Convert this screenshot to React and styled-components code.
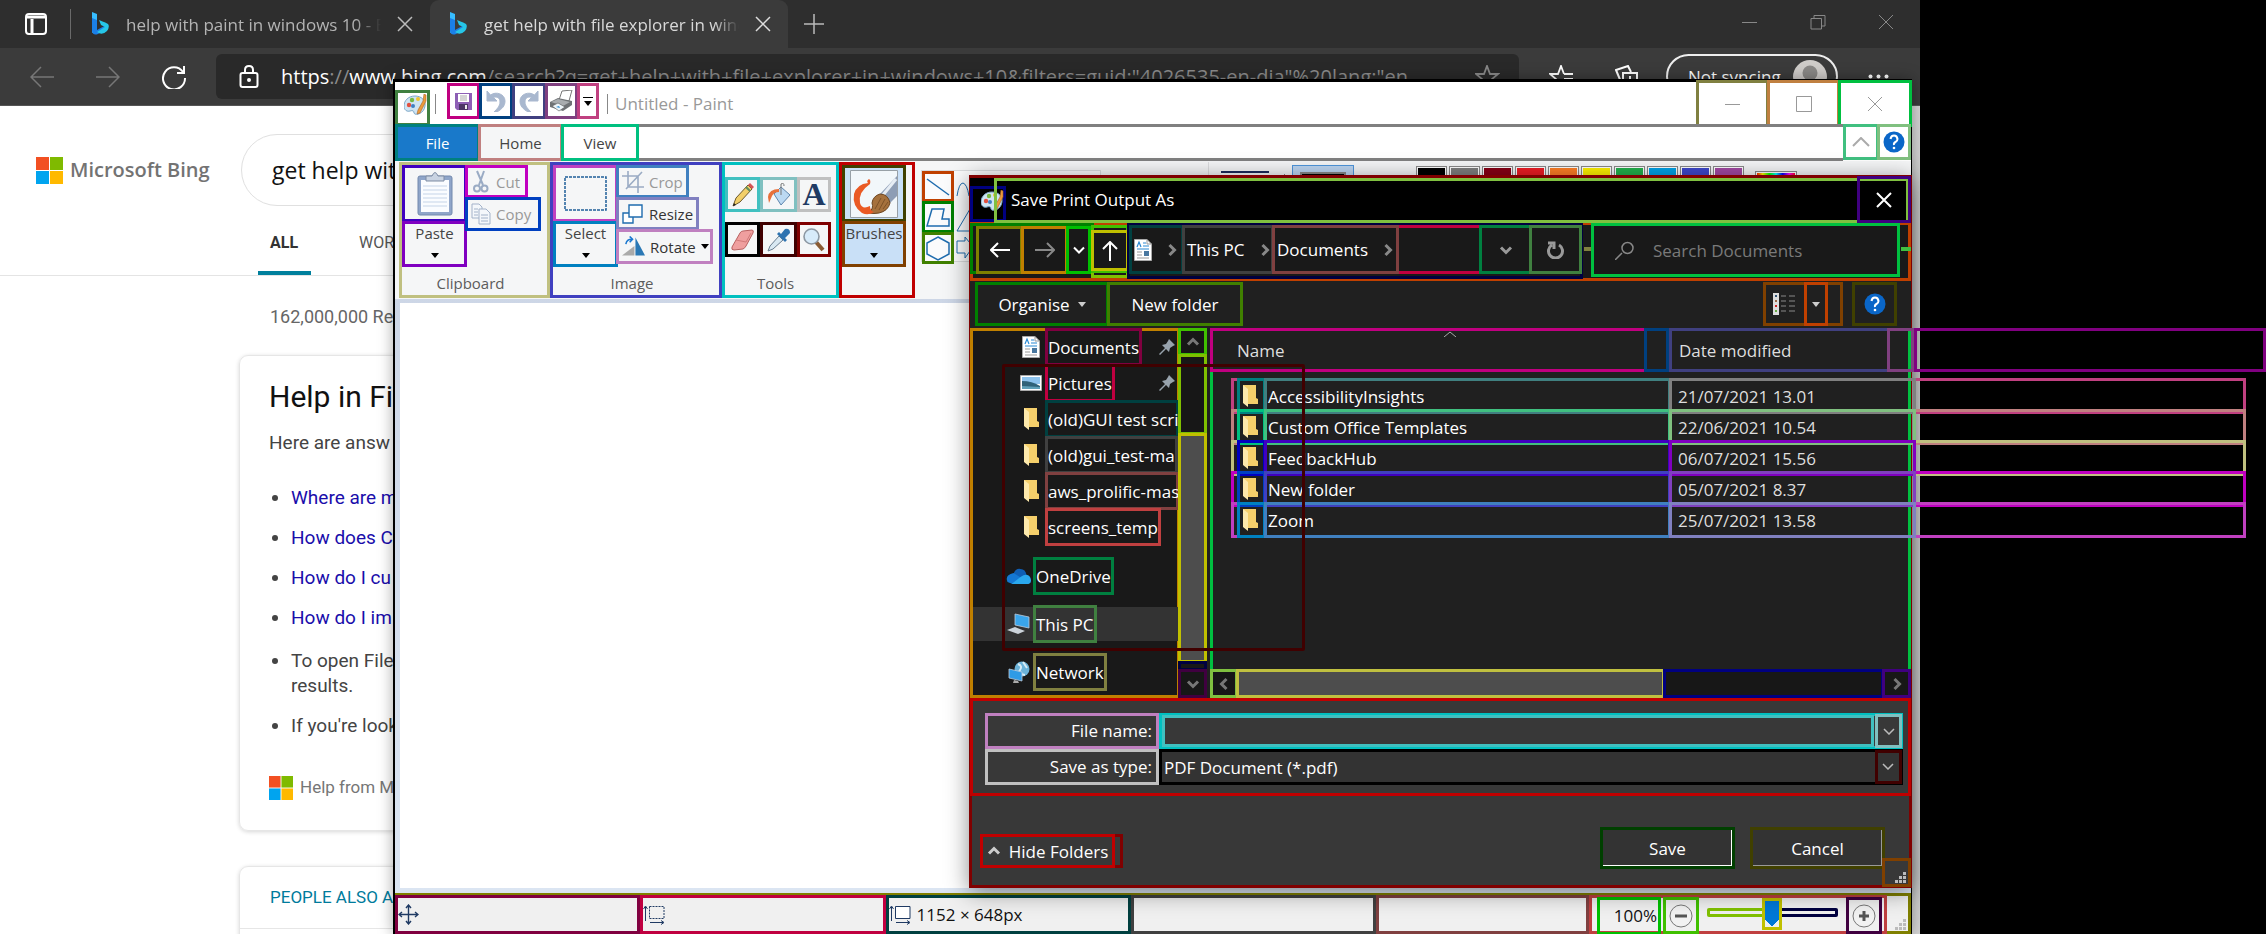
import React from "react";
import styled, { createGlobalStyle, css } from "styled-components";

const ui = '"Open Sans", "Noto Sans", sans-serif';
const web = 'Roboto, "Liberation Sans", sans-serif';

const Global = createGlobalStyle`
  *, *::before, *::after { box-sizing: border-box; }
  body { margin: 0; background: #000; font-family: ${ui}; }
  button, input, select { font: inherit; color: inherit; margin: 0; padding: 0; border: 0; background: none; border-radius: 0; outline: 0; }
  svg { display: block; flex: none; }
`;

const frame = css`
  box-shadow: inset 0 0 0 3px ${(p) => p.$c};
`;

const Desktop = styled.div`
  position: relative;
  height: 100vh;
  min-height: 900px;
  overflow: hidden;
  background: #000;
`;

/* ---------- browser ---------- */
const Browser = styled.div`
  position: relative;
  height: 100%;
  margin-right: 346px;
  background: #fff;
  overflow: hidden;
  display: flex;
  flex-direction: column;
`;
const TabStrip = styled.div`
  display: flex;
  align-items: center;
  height: 48px;
  flex: none;
  background: #2e2e2e;
  color: #b8b8b8;
  padding-left: 25px;
`;
const StripDivider = styled.span`
  width: 1px;
  height: 30px;
  margin: 0 1px 0 23px;
  background: #6a6a6a;
`;
const Tab = styled.div`
  display: flex;
  align-items: center;
  height: 48px;
  width: 358px;
  padding: 0 18px 0 20px;
  gap: 17px;
  font-size: 17px;
  border-radius: 9px 9px 0 0;
  background: ${(p) => (p.$active ? "#3b3b3b" : "transparent")};
  color: ${(p) => (p.$active ? "#d8d8d8" : "#b4b4b4")};
`;
const TabTitle = styled.span`
  flex: 1;
  min-width: 0;
  overflow: hidden;
  white-space: nowrap;
  mask-image: linear-gradient(90deg, #000 90%, transparent);
`;
const Plain = styled.button`
  display: flex;
  align-items: center;
  justify-content: center;
  width: ${(p) => p.$w || 14}px;
  flex: none;
`;
const WinControls = styled.div`
  display: flex;
  margin-left: auto;
  gap: 54px;
  padding-right: 27px;
  margin-top: -5px;
`;
const ToolBar = styled.div`
  display: flex;
  align-items: center;
  flex: none;
  height: 58px;
  padding: 0 31px 0 30px;
  background: #3b3b3b;
  border-bottom: 1px solid #555;
`;
const NavButtons = styled.div`
  display: flex;
  gap: 42px;
  margin-right: 30px;
`;
const Address = styled.div`
  flex: 1;
  display: flex;
  align-items: center;
  height: 45px;
  padding: 0 19px 0 23px;
  gap: 22px;
  border-radius: 6px;
  background: #292929;
  color: #8c8c8c;
  font-size: 20px;
  white-space: nowrap;
  b { font-weight: 400; color: #fff; }
  span { flex: 1; min-width: 0; overflow: hidden; }
`;
const Profile = styled.button`
  display: flex;
  align-items: center;
  gap: 12px;
  height: 45px;
  width: 172px;
  && { margin-left: 27px; padding: 0 7px 0 20px; border: 2px solid #eee; border-radius: 23px; color: #fff; font-size: 17px; }
  white-space: nowrap;
`;
const Extras = styled.div`
  display: flex;
  align-items: center;
  margin-left: 30px;
  gap: 41px;
`;
const Page = styled.div`
  flex: 1;
  min-height: 0;
  overflow: hidden;
  font-family: ${web};
  border-right: 8px solid #d4d4d4;
`;
const PageTop = styled.header`
  display: flex;
  align-items: center;
  padding: 28px 0 0 36px;
`;
const Brand = styled.a`
  display: flex;
  align-items: center;
  gap: 7px;
  width: 205px;
  color: #737373;
  font: 600 20px/28px ${ui};
  text-decoration: none;
  white-space: nowrap;
`;
const SearchBox = styled.input`
  width: 900px;
  height: 72px;
  && { padding-left: 30px; border: 1px solid #e0e0e0; border-radius: 36px; font-size: 23px; font-family: ${ui}; color: #111; }
`;
const Scopes = styled.nav`
  display: flex;
  gap: 48px;
  height: 70px;
  padding-left: 258px;
  border-bottom: 1px solid #e4e4e4;
  font-size: 16px;
  a { display: flex; align-items: center; padding: 8px 12px 0; color: #555; text-decoration: none; border-bottom: 4px solid transparent; margin-right: -12px; }
  a:first-child { color: #333; font-weight: 700; border-color: #00809d; margin-right: 0; width: 53px; }
  a + a { padding-left: 0; }
`;
const Count = styled.p`
  margin: 30px 0 27px 270px;
  font-size: 18px;
  line-height: 22px;
  color: #666;
`;
const Card = styled.section`
  width: 900px;
  margin: 0 0 35px 239px;
  padding: 23px 29px 30px;
  border: 1px solid #e6e6e6;
  border-radius: 9px;
  box-shadow: 0 1px 4px rgba(0, 0, 0, 0.16);
  color: #444;
  font-size: 19px;
  line-height: 25px;
  h2 { margin: 0; font-weight: 400; font-size: 30px; line-height: 36px; color: #111; }
  p { margin: 15px 0 0; }
  ul { margin: 30px 0 0; padding: 0 0 0 22px; }
  li { margin-bottom: 15px; }
  li:nth-child(4) { margin-bottom: 18px; }
  li a { color: #1a0dab; text-decoration: none; }
`;
const Source = styled.div`
  display: flex;
  align-items: center;
  gap: 7px;
  margin-top: 37px;
  color: #767676;
  font-size: 17px;
`;
const AlsoAsk = styled(Card)`
  padding: 0;
  h3 { margin: 0; padding: 18px 30px 18px; font-weight: 400; font-size: 17px; color: #007b9c; border-bottom: 1px solid #e6e6e6; }
  div { height: 60px; }
`;

/* ---------- paint window ---------- */
const Paint = styled.div`
  position: absolute;
  inset: 79px 354px 0 393px;
  display: flex;
  flex-direction: column;
  background: linear-gradient(#c8d1e2, #dce6f3);
  border: 3px solid #000;
  border-width: 3px 1px 0 2px;
  box-shadow: 0 0 14px rgba(0, 0, 0, 0.35);
`;
const PaintTitle = styled.div`
  display: flex;
  align-items: flex-start;
  height: 44px;
  flex: none;
  background: #fff;
  color: #999;
  font-size: 17px;
`;
const Sep = styled.i`
  width: 1px;
  height: 20px;
  margin: 12px ${(p) => p.$r || 8}px 0 ${(p) => p.$l || 5}px;
  background: #888;
`;
const Framed = styled.button`
  ${frame}
  display: flex;
  align-items: center;
  justify-content: center;
  flex: none;
  width: ${(p) => p.$w}px;
  height: ${(p) => p.$h}px;
  white-space: nowrap;
`;
const AppIcon = styled(Framed)`
  && { margin-top: 8px; padding: 0 0 6px 5px; }
`;
const QuickTools = styled.div`
  display: flex;
  padding: 1px 0 0 3px;
  ${Framed} + ${Framed} { margin-left: -1px; }
`;
const PaintCaption = styled.span`
  line-height: 44px;
`;
const CaptionButtons = styled.div`
  display: flex;
  margin: -2px -1px 0 auto;
  ${Framed} + ${Framed} { margin-left: -2px; }
`;
const RibbonTabs = styled.div`
  box-shadow: inset 0 3px #808080, inset 0 -3px #808080;
  display: flex;
  height: 37px;
  margin-top: -2px;
  flex: none;
  background: #fff;
  color: #444;
  font-size: 15px;
  ${Framed} + ${Framed} { margin-left: -2px; }
`;
const RibbonTab = styled(Framed)`
  background: ${(p) => p.$bg || "#fff"};
  color: ${(p) => (p.$bg === "#1979ca" ? "#fff" : "#444")};
`;
const RibbonEnd = styled.div`
  display: flex;
  margin-left: auto;
  background: #fff;
`;
const Ribbon = styled.div`
  display: flex;
  align-items: flex-start;
  height: 138px;
  flex: none;
  padding: 1px 0 0 4px;
  background: #f5f6f7;
  color: #444;
  font-size: 15px;
`;
const Group = styled.section`
  ${frame}
  position: relative;
  display: flex;
  align-items: flex-start;
  flex: none;
  width: ${(p) => p.$w}px;
  height: 136px;
  padding: 3px;
`;
const GroupName = styled.span`
  position: absolute;
  inset: auto 0 3px;
  text-align: center;
  line-height: 24px;
  color: #5c5c5c;
  padding-right: ${(p) => p.$r || 0}px;
`;
const Stack = styled.div`
  display: flex;
  flex-direction: column;
  margin-left: ${(p) => p.$l || 0}px;
  > * + * { margin-top: -1px; }
`;
const Tool = styled(Framed)`
  && { justify-content: flex-start; gap: 5px; padding-left: 6px; color: ${(p) => (p.$off ? "#999" : "#333")}; }
`;
const LetterTool = styled(Framed)`
  && { font: 700 32px "Liberation Serif", serif; color: #1f3a63; }
`;
const Big = styled(Framed)`
  && { background: ${(p) => p.$bg || "none"}; }
`;
const BigLabel = styled(Big)`
  && { flex-direction: column; justify-content: flex-start; gap: 7px; line-height: 25px; }
`;
const ToolGrid = styled.div`
  display: grid;
  grid-template-columns: 35px 37px 34px;
  row-gap: 10px;
  padding-top: 12px;
  ${Framed} { width: 100%; }
`;
const Shapes = styled.div`
  display: flex;
  flex: none;
  width: 180px;
  height: 92px;
  margin: 8px 0 0 6px;
  border: 1px solid #d9dbdd;
  background: #fbfbfc;
`;
const SizeArea = styled.div`
  display: flex;
  flex: 1;
  height: 40px;
  margin-left: 107px;
  border-left: 1px solid #dcdddf;
`;
const SizeLine = styled.i`
  width: 48px;
  height: 2px;
  margin: 9px 14px 0 12px;
  background: #1c2a5c;
`;
const SizeButton = styled.button`
  width: 62px;
  height: 40px;
  && { margin: 3px 62px 0 6px; padding: 6px 7px; border: 1px solid #4f96dc; background: #bcd6f2; }
  i { display: block; height: 30px; border: 2px solid #888; background: #000; }
`;
const Swatch = styled.button`
  width: 31px;
  height: 30px;
  && { margin: 4px 2px 0 0; border: 1px solid #8a8a8a; background: ${(p) => p.$bg}; box-shadow: inset 0 0 0 1px #fff; }
`;
const Rainbow = styled(Swatch)`
  width: 42px;
  && { margin: 9px 0 0 9px; background: linear-gradient(90deg, red, yellow, lime, cyan, blue, magenta, red); }
`;
const Canvas = styled.div`
  flex: 1;
  margin: 4px 28px 5px 5px;
  background: #fff;
`;
const Status = styled.div`
  display: flex;
  flex: none;
  height: 41px;
  padding-top: 2px;
  background: #f0f0f0;
  box-shadow: inset 0 0 0 3px #808000;
  font-size: 17px;
  color: #111;
`;
const Cell = styled.div`
  ${frame}
  display: flex;
  align-items: center;
  gap: 6px;
  flex: ${(p) => p.$grow || 246} 1 0;
  padding-left: 3px;
  white-space: nowrap;
`;
const ZoomGroup = styled.div`
  ${frame}
  display: flex;
  align-items: center;
  flex: none;
  width: 298px;
  padding: 2px 4px 0 8px;
`;
const ZoomValue = styled.output`
  ${frame}
  width: 64px;
  height: 38px;
  line-height: 38px;
  text-align: right;
  padding-right: 4px;
  margin-right: 2px;
`;
const Slider = styled.div`
  position: relative;
  display: flex;
  align-self: flex-start;
  width: 131px;
  height: 9px;
  margin: 11px 8px 0;
`;
const TrackPart = styled.i`
  ${frame}
  flex: 1;
  border-radius: 2px;
`;
const Range = styled.input`
  position: absolute;
  inset: -10px 0;
  width: 100%;
  height: 32px;
  appearance: none;
  &::-webkit-slider-thumb {
    appearance: none;
    width: 20px;
    height: 32px;
    border: 3px solid #c0c000;
    background:
      linear-gradient(#0078d7, #0078d7) 0 0 / 14px 18px no-repeat,
      linear-gradient(to bottom left, #0078d7 50%, transparent 50%) 0 18px / 7px 8px no-repeat,
      linear-gradient(to bottom right, #0078d7 50%, transparent 50%) 7px 18px / 7px 8px no-repeat,
      #f0f0f0;
    background-origin: padding-box;
  }
`;
const GripSlot = styled.div`
  display: flex;
  align-items: flex-end;
  width: 24px;
  padding: 0 4px 3px 8px;
`;

/* ---------- save dialog ---------- */
const Dialog = styled.div`
  position: absolute;
  top: 175px;
  left: 969px;
  right: 354px;
  padding: 3px 1px 1px;
  background: #383838;
  box-shadow: inset 0 0 0 3px #800000, 0 4px 22px rgba(0, 0, 0, 0.45);
  color: #fff;
  font-size: 17px;
`;
const DialogTitle = styled.div`
  display: flex;
  align-items: flex-start;
  height: 45px;
  background: #000;
`;
const TitleIcon = styled.span`
  ${frame}
  width: 36px;
  height: 36px;
  margin: 8px -12px 0 0;
  padding: 4px 0 0 11px;
`;
const TitleText = styled.h1`
  ${frame}
  flex: 1;
  margin: 0 2px 0 0;
  padding-left: 17px;
  font-size: 17px;
  font-weight: 400;
  line-height: 44px;
  height: 45px;
`;
const TitleClose = styled(Framed)`
  && { margin: -2px 0 0 -54px; }
`;
const NavBar = styled.div`
  ${frame}
  display: flex;
  align-items: flex-start;
  height: 59px;
  margin-top: -1px;
  padding-top: 1px;
  background: #191919;
`;
const History = styled.div`
  ${frame}
  display: flex;
  width: 124px;
  height: 51px;
  margin: 0 -3px 0 0;
  padding: 3px 0 0 6px;
  ${Framed} + ${Framed} { margin-left: -2px; }
`;
const UpOuter = styled.div`
  ${frame}
  width: 38px;
  height: 53px;
  margin: 2px -2px 0 0;
`;
const UpInner = styled.div`
  ${frame}
  height: 48px;
  padding-top: 5px;
`;
const PathBar = styled.div`
  ${frame}
  display: flex;
  flex: 1;
  height: 56px;
  padding: 2px 1px 0 2px;
  background: #191919;
`;
const Path = styled.nav`
  ${frame}
  display: flex;
  flex: 1;
  height: 49px;
`;
const Crumb = styled(Framed)`
  && { justify-content: flex-start; gap: 13px; padding-left: 5px; }
  && + & { margin-left: -2px; }
`;
const PathButton = styled(Framed)`
  && { margin-left: -3px; }
`;
const Tick = styled.i`
  flex: none;
  width: ${(p) => p.$w}px;
  height: 4px;
  margin: 24px 0 0 1px;
  background: ${(p) => p.$c};
`;
const SearchField = styled.label`
  ${frame}
  display: flex;
  align-items: center;
  gap: 19px;
  width: 309px;
  height: 54px;
  padding-left: 24px;
  flex: none;
  input { width: 220px; }
  input::placeholder { color: #7a7a7a; opacity: 1; }
`;
const Commands = styled.div`
  display: flex;
  height: 48px;
  padding: 1px 14px 3px 5px;
  background: #202020;
  ${Framed} + ${Framed} { margin-left: -2px; }
`;
const Command = styled(Framed)`
  && { gap: 8px; }
`;
const ViewGroup = styled.div`
  ${frame}
  display: flex;
  align-items: center;
  gap: 9px;
  width: 80px;
  height: 44px;
  margin: 0 9px 0 auto;
  padding-left: 10px;
`;
const Body = styled.div`
  display: flex;
  height: 370px;
  margin-top: -1px;
  background: #202020;
`;
const Tree = styled.ul`
  ${frame}
  width: 210px;
  margin: 0 -2px 0 0;
  padding: 1px 1px 0 3px;
  background-color: #191919;
  list-style: none;
  overflow: hidden;
`;
const Node = styled.li`
  display: flex;
  align-items: center;
  height: ${(p) => (p.$root ? 34 : 36)}px;
  margin: ${(p) => (p.$root ? "14px" : 0)} 0 0;
  padding-left: ${(p) => (p.$root ? 33 : 45)}px;
  background: ${(p) => (p.$on ? "#333" : "none")};
  > svg:first-child { width: 26px; margin-right: 1px; }
  > svg:last-child { margin-left: auto; margin-right: 4px; }
`;
const NodeName = styled.button`
  ${frame}
  height: 38px;
  flex: 0 1 auto;
  min-width: 0;
  overflow: hidden;
  white-space: nowrap;
  && { padding: 0 3px; }
`;
const VBar = styled.div`
  display: flex;
  flex-direction: column;
  width: 29px;
  margin-right: 3px;
  background: #171717;
  > * + * { margin-top: -2px; }
`;
const BarPart = styled.i`
  ${frame}
  flex: ${(p) => p.$f};
  background: ${(p) => p.$bg || "#171717"};
`;
const Files = styled.div`
  ${frame}
  display: flex;
  flex-direction: column;
  flex: 1;
  min-width: 0;
`;
const FileTable = styled.table`
  display: block;
  width: calc(100% + 355px);
  thead { display: block; }
  tbody { display: block; padding: 6px 20px 0 21px; }
`;
const HeadRow = styled.tr`
  display: grid;
  grid-template-columns: 459px 245px 1fr;
  color: #dedede;
`;
const HeadCell = styled.th`
  ${frame}
  display: flex;
  align-items: center;
  justify-content: space-between;
  height: 44px;
  padding: 0 0 0 ${(p) => p.$l}px;
  font-weight: 400;
  > svg { align-self: flex-start; margin: 3px 29px 0 0; }
`;
const Splitter = styled.i`
  ${frame}
  width: ${(p) => p.$w}px;
  height: 44px;
`;
const FileRow = styled.tr`
  ${frame}
  display: grid;
  grid-template-columns: 27px 405px 245px 1fr;
  padding-left: 6px;
  height: 36px;
  margin-bottom: -5px;
`;
const FileCell = styled.td`
  ${frame}
  padding: 0 0 0 ${(p) => p.$l}px;
  margin-right: -2px;
  line-height: 37px;
  height: 36px;
  white-space: nowrap;
  color: ${(p) => p.$fg || "#fff"};
  > svg { margin-top: 7px; }
`;
const HBar = styled.div`
  display: flex;
  height: 29px;
  margin-top: auto;
  background: #171717;
  > * + * { margin-left: -2px; }
`;
const PaneOutline = styled.div`
  ${frame}
  position: absolute;
  left: 33px;
  top: 189px;
  width: 303px;
  height: 287px;
  border-radius: 2px;
  pointer-events: none;
`;
const Form = styled.form`
  ${frame}
  display: grid;
  grid-template-columns: 174px 1fr;
  height: 98px;
  padding: 15px 8px 11px 15px;
`;
const FieldLabel = styled.label`
  ${frame}
  height: 36px;
  line-height: 36px;
  padding-right: 7px;
  text-align: right;
`;
const NameField = styled.div`
  ${frame}
  display: flex;
  height: 36px;
  padding: 1px 1px 1px 3px;
`;
const NameInput = styled.input`
  ${frame}
  flex: 1;
  min-width: 0;
  height: 32px;
  && { margin: 1px 1px 0 0; padding-left: 6px; color: #fff; }
`;
const TypeField = styled.div`
  ${frame}
  position: relative;
  display: flex;
  height: 36px;
  background: #333;
  svg { position: absolute; right: 9px; top: 14px; pointer-events: none; }
  i { position: absolute; right: 1px; top: 1px; width: 27px; height: 34px; box-shadow: inset 0 0 0 3px #400000; pointer-events: none; }
`;
const TypeSelect = styled.select`
  flex: 1;
  appearance: none;
  && { padding-left: 5px; }
`;
const Footer = styled.div`
  position: relative;
  display: flex;
  align-items: flex-start;
  height: 91px;
  padding: 31px 26px 0 10px;
`;
const HideWrap = styled.div`
  ${frame}
  width: 143px;
  height: 34px;
  margin: 7px auto 0 0;
`;
const Action = styled.button`
  width: 135px;
  height: 42px;
  && { margin-left: ${(p) => p.$l || 0}px; border: 3px solid ${(p) => p.$c}; background: #333; box-shadow: inset -1px -1px ${(p) => p.$edge}; }
`;
const DialogGrip = styled.div`
  ${frame}
  position: absolute;
  right: 0;
  bottom: 0;
  width: 29px;
  height: 29px;
  padding: 14px 0 0 13px;
`;

/* ---------- drawings ---------- */
const Stroke = ({ d, w = 16, h = 16, c = "#999", s = 1, vb, ...rest }) => (
  <svg width={w} height={h} viewBox={vb || `0 0 ${w} ${h}`} fill="none" stroke={c} strokeWidth={s} {...rest}>
    <path d={d} />
  </svg>
);
const Cross = ({ c = "#999", s = 1 }) => <Stroke c={c} s={s} d="M1 1 15 15M15 1 1 15" />;
const Minus = ({ c = "#999" }) => <Stroke c={c} d="M0 8.5H15" />;
const Down = ({ c = "#000", w = 8 }) => (
  <svg width={w} height="5" viewBox="0 0 8 5"><path d="M0 0H8L4 5Z" fill={c} /></svg>
);
const Chev = ({ dir = "down", c = "#888", s = 3, w = 14 }) => {
  const r = { down: 0, up: 180, left: 90, right: -90 }[dir];
  return (
    <svg width={w} height={w} viewBox="0 0 14 14" fill="none" stroke={c} strokeWidth={s}>
      <path d="M2 4.500 7 9.500 12 4.500" transform={`rotate(${r} 7 7)`} />
    </svg>
  );
};
const BingLogo = () => (
  <svg width="17" height="24" viewBox="0 0 17 24">
    <path d="M0 0 5 2V18L0 21Z" fill="#37bdff" />
    <path d="M0 6V19Q1 24 6 22L14 17Q17 15 16 12L5 18 5 8Z" fill="#1b7fe8" />
    <path d="M7 8 9 13 13 15 5 20Q10 24 15 19 18 15 16 12Q15 11 7 8Z" fill="#26c6e8" />
  </svg>
);
const MsLogo = ({ size = 27 }) => (
  <svg width={size} height={size} viewBox="0 0 27 27">
    <path d="M0 0H13V13H0Z" fill="#f25022" /><path d="M14 0H27V13H14Z" fill="#7fba00" />
    <path d="M0 14H13V27H0Z" fill="#00a4ef" /><path d="M14 14H27V27H14Z" fill="#ffb900" />
  </svg>
);
const Palette = () => (
  <svg width="23" height="22" viewBox="0 0 23 22">
    <path d="M11 2C4 2 0 7 0 12 0 16 3 18 6 17 9 16 10 17 10 19 11 22 20 20 21 12 22 6 17 2 11 2Z" fill="#cfe4f3" stroke="#7ba7c7" />
    <circle cx="5" cy="11" r="2.200" fill="#e2503f" /><circle cx="8" cy="6" r="2.200" fill="#76b843" />
    <circle cx="14" cy="5" r="2" fill="#f0c233" /><circle cx="9" cy="12" r="2" fill="#3f7fc4" />
    <path d="M20 0 22 1V7L16 19 13 20 14 16 19 7Z" fill="#ee9a3b" stroke="#a8642a" strokeWidth=".6" />
  </svg>
);
const Save = () => (
  <svg width="17" height="17" viewBox="0 0 17 17">
    <path d="M0 0H17V17H2L0 15Z" fill="#8d5fb5" /><path d="M3 1H14V9H3Z" fill="#fff" />
    <path d="M5 3H12M5 5H12M5 7H12" stroke="#aaa" /><path d="M4 11H13V17H4Z" fill="#4b3566" /><path d="M10 12H12V16H10Z" fill="#eee" />
  </svg>
);
const Undo = ({ flip }) => (
  <svg width="20" height="21" viewBox="0 0 20 21">
    <g transform={flip ? "translate(20 0) scale(-1 1)" : undefined}>
      <path d="M1 0V10H11L7.500 6.500C11 5 14 7 14 11 14 15 11 18 8 21H11C16 18 19 15 19 10 19 3 10 0 4.500 4Z" fill="#a9b8cf" stroke="#a9b8cf" />
    </g>
  </svg>
);
const Printer = () => (
  <svg width="25" height="22" viewBox="0 0 25 22">
    <path d="M10 10 13 1 23 0 20 11Z" fill="#fff" stroke="#777" />
    <path d="M1 12 9 8 23 11V15L14 21 1 17Z" fill="#6f7275" /><path d="M2 12 9 9 21 12 14 16Z" fill="#a9acaf" />
    <path d="M3 16 9 13 16 17 10 21Z" fill="#eef5fa" stroke="#555" strokeWidth=".6" /><path d="M7 17 10 16 11 18Z" fill="#2f8fd4" />
  </svg>
);
const Clipboard = () => (
  <svg width="36" height="44" viewBox="0 0 36 44">
    <rect x="1" y="4" width="34" height="39" rx="2" fill="#8fa5c9" stroke="#7389ad" />
    <path d="M4 8H32V40H4Z" fill="#fafcff" /><path d="M6 14H30M6 18H30M6 22H30M6 26H30M6 30H30M6 34H30" stroke="#c5d4e8" />
    <path d="M9 4H15Q18-3 21 4H27V9H9Z" fill="#c9d3e2" stroke="#7d8ba3" />
  </svg>
);
const Scissors = () => (
  <svg width="20" height="24" viewBox="0 0 20 24" fill="none" stroke="#9aabc4" strokeWidth="2">
    <path d="M6 1 12 15M13 1 8 15" /><circle cx="6" cy="18.500" r="3" /><circle cx="13.500" cy="18.500" r="3" />
  </svg>
);
const CopyIcon = () => (
  <svg width="20" height="22" viewBox="0 0 20 22" fill="#f4f7fb" stroke="#a3b2c9">
    <path d="M1 1H8L11 4V15H1Z" /><path d="M8 6H15L19 10V21H8Z" /><path d="M10 12H17M10 15H17M10 18H17M3 6H7M3 9H7M3 12H7" />
  </svg>
);
const SelectIcon = () => <Stroke w={43} h={35} c="#1f5f99" strokeDasharray="3 1" d="M1 1H42V34H1Z" s={1.5} />;
const CropIcon = () => <Stroke w={22} h={22} c="#9aabc4" s={1.6} d="M6 0V16H22M0 5H16V22M4 18 20 1" />;
const ResizeIcon = () => (
  <svg width="22" height="20" viewBox="0 0 22 20" fill="#fff" stroke="#1f6cae" strokeWidth="1.4"><path d="M1 9H11V19H1Z" /><path d="M7 1H20V13H7Z" /></svg>
);
const RotateIcon = () => (
  <svg width="23" height="21" viewBox="0 0 24 21"><path d="M0 20 13 10V20Z" fill="#aaa" /><path d="M14 1 24 20H14Z" fill="#2a78b5" /><path d="M4 8Q5 3 10 3M8 0 11 3 8 6" fill="none" stroke="#1a78d0" strokeWidth="1.600" /></svg>
);
const Pencil = () => (
  <svg width="22" height="24" viewBox="0 0 22 24"><path d="M1 23 4 15 16 2 20 6 8 19Z" fill="#f2cf69" stroke="#6d5a2b" /><path d="M16 2 18 0 22 4 20 6Z" fill="#d45555" /><path d="M1 23 2 20 4 22Z" fill="#222" /><path d="M14 4 18 8" stroke="#5f8f5f" strokeWidth="2" /></svg>
);
const Bucket = () => (
  <svg width="24" height="24" viewBox="0 0 24 24"><path d="M7 11 14 4 23 12 14 22Z" fill="#bcd9f2" stroke="#5f86ad" /><path d="M14 12V1Q17-1 17 3" fill="none" stroke="#777" /><path d="M12 6Q2 6 1 14L2 20 5 13Q7 9 12 9Z" fill="#e8703a" /></svg>
);
const Eraser = () => (
  <svg width="24" height="22" viewBox="0 0 24 22"><path d="M1 18 9 4Q10 2 12 2L21 1Q23 1 22 4L15 17Q14 19 12 20L3 21Q0 21 1 18Z" fill="#ef9f9f" stroke="#b86161" /><path d="M5 11 15 13M15 13 20 4" fill="none" stroke="#d27b7b" /></svg>
);
const Picker = () => (
  <svg width="24" height="24" viewBox="0 0 24 24"><path d="M1 23 3 18 12 8 16 12 6 21Z" fill="#d9e8f2" stroke="#6a7e90" /><path d="M10 6 18 14 20 12 18 10 23 5Q23 0 18 1L14 6 12 4Z" fill="#2f73b0" /></svg>
);
const Magnifier = () => (
  <svg width="22" height="24" viewBox="0 0 22 24"><path d="M13 14 20 22" stroke="#8a5b33" strokeWidth="4" /><circle cx="8.500" cy="8.500" r="7.500" fill="#d7ebfa" stroke="#8d98a3" strokeWidth="1.600" /></svg>
);
const BrushPicture = () => (
  <svg width="48" height="48" viewBox="0 0 48 48">
    <path d="M.5.5H47.500V47.500H.5Z" fill="#f2f7fa" stroke="#98a0a6" />
    <path d="M47 6V26L40 33 30 24Z" fill="#8d9db5" /><path d="M46 9 33 25" stroke="#e6edf4" strokeWidth="3" />
    <path d="M30 24Q38 24 40 33 38 41 29 43 24 44 19 43 24 38 22 33 23 26 30 24Z" fill="#a5713d" stroke="#6d4520" />
    <path d="M25 39 31 28M29 40 35 29M33 39 38 32" stroke="#7d5228" />
    <path d="M19 9Q16 11 18 13 7 14 4 24 2 36 12 43 18 46 24 42 20 41 20 36 12 40 10 33 8 22 20 14Q21 10 19 9Z" fill="#ea5a24" />
  </svg>
);
const ShapeMore = () => <Stroke w={16} h={90} c="#1f6cae" d="M3 25Q5 12 9 12 13 13 15 25M16 38 3 60H16M3 70H11V66L16 72M3 82H11V87L16 80M3 70V82" />;
const DocIcon = () => (
  <svg width="18" height="22" viewBox="0 0 18 22">
    <path d="M.5.5H13L17.500 5V21.500H.5Z" fill="#fff" stroke="#aaa" /><path d="M13 .5V5H17.500" fill="none" stroke="#999" />
    <path d="M3 8 5 3 7 8M9 4H12M9 7H15M3 10H15" fill="none" stroke="#2a8ad4" strokeWidth="1.200" /><path d="M3 13H8M3 16H8M3 19H15" stroke="#999" /><path d="M10 12H15V17H10Z" fill="#49779f" />
  </svg>
);
const PicIcon = () => (
  <svg width="22" height="16" viewBox="0 0 22 16"><path d="M.5.5H21.500V15.500H.5Z" fill="#fff" stroke="#aaa" /><path d="M2 2H20V9H2Z" fill="#8ec4ee" /><path d="M2 6Q12 6 20 11V14H2Z" fill="#2f6278" /><path d="M2 11 20 12V14H2Z" fill="#5fa0b8" /></svg>
);
const Folder = () => (
  <svg width="16" height="22" viewBox="0 0 16 22"><path d="M1 0H14V13L16 14V19H2Z" fill="#f5cf6b" /><path d="M1 0 6 4V22L1 18Z" fill="#fde9ac" /></svg>
);
const Cloud = () => (
  <svg width="25" height="17" viewBox="0 0 25 17"><path d="M7 6Q9 0 14 1 19 1 20 7L10 12Z" fill="#0f5fb5" /><path d="M1 14Q-2 7 7 5L18 12 6 16Z" fill="#1478d4" /><path d="M5 16 14 9Q21 4 24 10 26 16 20 16Z" fill="#2aa8ee" /></svg>
);
const Pc = () => (
  <svg width="24" height="22" viewBox="0 0 24 22"><path d="M8 1 22 4V15L8 12Z" fill="#3aa5ea" stroke="#bcd" strokeWidth=".8" /><path d="M0 17 8 14 18 18 11 21Z" fill="#ccd3da" /></svg>
);
const Net = () => (
  <svg width="24" height="22" viewBox="0 0 24 22"><circle cx="15" cy="8" r="7.500" fill="#6bb2d8" /><path d="M11 3Q16 5 13 9T18 14M16 1 20 7" stroke="#d8ecf5" strokeWidth="2" fill="none" /><path d="M2 8 15 11V20L2 17Z" fill="#2f9be6" stroke="#bcd" strokeWidth=".8" /><path d="M7 19 11 20 12 22H6Z" fill="#aaa" /></svg>
);
const Pin = () => (
  <svg width="16" height="16" viewBox="0 0 16 16" fill="#98a3ad"><path d="M10 0 16 6 14 7 11 9 10 13 7 10 1 16 0 15 6 9 3 6 7 5 9 2Z" /></svg>
);
const Help = ({ size = 22 }) => (
  <svg width={size} height={size} viewBox="0 0 22 22"><circle cx="11" cy="11" r="10.500" fill="#0a66c8" /><path d="M7.500 8Q8 4.500 11 4.500T14.500 8Q14.500 10 12.500 11T11 14" fill="none" stroke="#fff" strokeWidth="2" /><circle cx="11" cy="17" r="1.300" fill="#fff" /></svg>
);
const Dots = ({ c = "#bbb" }) => (
  <svg width="12" height="12" viewBox="0 0 12 12" fill={c}><path d="M8 0h3v3H8zM4 4h3v3H4zM8 4h3v3H8zM0 8h3v3H0zM4 8h3v3H4zM8 8h3v3H8z" /></svg>
);
const RoundIcon = ({ plus }) => (
  <svg width="24" height="24" viewBox="0 0 24 24"><circle cx="12" cy="12" r="11" fill="#f2f2f2" stroke="#777" /><path d={plus ? "M7 12H17M12 7V17" : "M6 12H18"} stroke="#555" strokeWidth="3" /></svg>
);
const Star = ({ lines, c }) => (
  <Stroke w={25} h={24} c={c} s={1.8} d={lines ? "M15 9 12 1 9 9H1L7 14 5 22 12 17M15 9H24M15 14H24" : "M12 1 15 9H23L17 14 19 22 12 17 5 22 7 14 1 9H9Z"} />
);
const MoveIcon = () => <Stroke w={21} h={21} c="#1f3a63" s={1.4} d="M10.500 1V20M1 10.500H20M8 4 10.500 1 13 4M8 17 10.500 20 13 17M4 8 1 10.500 4 13M17 8 20 10.500 17 13" />;
const ExtentIcon = ({ dashed }) => (
  <svg width="22" height="20" viewBox="0 0 22 20" fill="none" stroke="#1f3a63"><path d="M2.500 16V2M.5 4 2.500 1 4.500 4M7 17.500H20M18 15.500 21 17.500 18 19.500" /><path d="M6.500 1.500H21V13.500H6.500Z" strokeDasharray={dashed ? "2 1" : undefined} fill={dashed ? "none" : "#fff"} /></svg>
);

const swatches = ["#000", "#7f7f7f", "#880015", "#ed1c24", "#ff7f27", "#fff200", "#22b14c", "#00a2e8", "#3f48cc", "#a349a4"];
const files = [
  ["AccessibilityInsights", "21/07/2021 13.01", "#c04080", "#008080", "#408080", "#808080"],
  ["Custom Office Templates", "22/06/2021 10.54", "#c08080", "#00c080", "#40c080", "#80c080"],
  ["FeedbackHub", "06/07/2021 15.56", "#c0c080", "#0000c0", "#4000c0", "#8000c0"],
  ["New folder", "05/07/2021 8.37", "#c000c0", "#0040c0", "#4040c0", "#8040c0"],
  ["Zoom", "25/07/2021 13.58", "#c040c0", "#0080c0", "#4080c0", "#8080c0"],
];
const nodes = [
  ["Documents", DocIcon, "#800040", { pin: true }],
  ["Pictures", PicIcon, "#c00040", { pin: true }],
  ["(old)GUI test scri", Folder, "#004040", {}],
  ["(old)gui_test-ma", Folder, "#404040", {}],
  ["aws_prolific-mas", Folder, "#804040", {}],
  ["screens_temp", Folder, "#c04040", {}],
  ["OneDrive", Cloud, "#008040", { root: true }],
  ["This PC", Pc, "#408040", { root: true, on: true }],
  ["Network", Net, "#808040", { root: true }],
];

function BrowserWindow() {
  return (
    <Browser>
      <TabStrip>
        <Plain $w={22} aria-label="Tab actions">
          <svg width="22" height="22" viewBox="0 0 22 22" fill="none" stroke="#fff" strokeWidth="2"><rect x="1" y="1" width="20" height="20" rx="3" /><path d="M1 4H21M7 6V21" strokeWidth="3" /></svg>
        </Plain>
        <StripDivider />
        <Tab><BingLogo /><TabTitle>help with paint in windows 10 - B</TabTitle><Plain aria-label="Close tab"><Cross c="#bbb" s={1.5} /></Plain></Tab>
        <Tab $active><BingLogo /><TabTitle>get help with file explorer in wind</TabTitle><Plain aria-label="Close tab"><Cross c="#ddd" s={1.5} /></Plain></Tab>
        <Plain $w={52} aria-label="New tab"><Stroke w={22} h={22} c="#bbb" s={1.5} d="M11 1V21M1 11H21" /></Plain>
        <WinControls>
          <Plain aria-label="Minimise"><Minus c="#888" /></Plain>
          <Plain aria-label="Restore"><Stroke c="#888" d="M1 4.500H11.500V15H1ZM4 4.500V1.500H15V12H11.500" /></Plain>
          <Plain aria-label="Close"><Cross c="#888" /></Plain>
        </WinControls>
      </TabStrip>
      <ToolBar>
        <NavButtons>
          <Plain $w={24} aria-label="Back"><Stroke w={24} h={22} c="#777" s={1.5} d="M24 11H1M11 1 1 11 11 21" /></Plain>
          <Plain $w={24} aria-label="Forward"><Stroke w={24} h={22} c="#777" s={1.5} d="M0 11H23M13 1 23 11 13 21" /></Plain>
          <Plain $w={24} aria-label="Refresh"><Stroke w={24} h={24} c="#fff" s={2} d="M21 7A11 11 0 1 0 23 13M22 1V8H15" /></Plain>
        </NavButtons>
        <Address>
          <svg width="20" height="24" viewBox="0 0 20 24" fill="none" stroke="#fff" strokeWidth="2"><rect x="1.500" y="8" width="17" height="14" rx="2" /><path d="M6 8V5Q6 1 10 1T14 5V8" /><circle cx="10" cy="15" r="1" fill="#fff" /></svg>
          <span><b>https</b>://<b>www.bing.com</b>/search?q=get+help+with+file+explorer+in+windows+10&amp;filters=guid:"4026535-en-dia"%20lang:"en</span>
          <Star c="#888" />
        </Address>
        <Extras>
          <Plain $w={25} aria-label="Favourites"><Star lines c="#fff" /></Plain>
          <Plain $w={24} aria-label="Collections"><Stroke w={24} h={24} c="#fff" s={2} d="M6 17 1 5 13 1 16 7M8 8H22V22H8ZM15 11V19M11 15H19" /></Plain>
        </Extras>
        <Profile>Not syncing
          <svg width="34" height="34" viewBox="0 0 34 34"><circle cx="17" cy="17" r="17" fill="#cfccc9" /><circle cx="17" cy="13" r="7.500" fill="#8a8886" /><path d="M6 29Q17 18 28 29" fill="#8a8886" /></svg>
        </Profile>
        <Extras><Plain $w={21} aria-label="Menu"><svg width="21" height="5" fill="#fff"><circle cx="2.500" cy="2.500" r="2" /><circle cx="10.500" cy="2.500" r="2" /><circle cx="18.500" cy="2.500" r="2" /></svg></Plain></Extras>
      </ToolBar>
      <Page>
        <PageTop>
          <Brand href="#"><MsLogo />Microsoft Bing</Brand>
          <SearchBox aria-label="Search" defaultValue="get help with" />
        </PageTop>
        <Scopes><a href="#">ALL</a><a href="#">WORK</a></Scopes>
        <Count>162,000,000 Re</Count>
        <Card>
          <h2>Help in Fil</h2>
          <p>Here are answ</p>
          <ul>
            <li><a href="#">Where are m</a></li>
            <li><a href="#">How does C</a></li>
            <li><a href="#">How do I cu</a></li>
            <li><a href="#">How do I im</a></li>
            <li>To open File<br />results.</li>
            <li>If you're look</li>
          </ul>
          <Source><MsLogo size={24} />Help from Mi</Source>
        </Card>
        <AlsoAsk><h3>PEOPLE ALSO A</h3><div /></AlsoAsk>
      </Page>
    </Browser>
  );
}

function PaintWindow() {
  return (
    <Paint>
      <PaintTitle>
        <AppIcon $c="#408040" $w={35} $h={36} aria-label="Paint"><Palette /></AppIcon>
        <Sep />
        <QuickTools>
          <Framed $c="#c00080" $w={33} $h={36} aria-label="Save"><Save /></Framed>
          <Framed $c="#004080" $w={34} $h={36} aria-label="Undo"><Undo /></Framed>
          <Framed $c="#404080" $w={34} $h={36} aria-label="Redo"><Undo flip /></Framed>
          <Framed $c="#804080" $w={33} $h={36} aria-label="Print"><Printer /></Framed>
          <Framed $c="#c04080" $w={22} $h={36} aria-label="Customise"><svg width="10" height="9"><path d="M0 .5H10" stroke="#000" /><path d="M1 4H9L5 9Z" /></svg></Framed>
        </QuickTools>
        <Sep $l={8} $r={7} />
        <PaintCaption>Untitled - Paint</PaintCaption>
        <CaptionButtons>
          <Framed $c="#808040" $w={73} $h={47} aria-label="Minimise"><Minus /></Framed>
          <Framed $c="#c08040" $w={73} $h={47} aria-label="Maximise"><Stroke d="M.5.5H15.500V15.500H.5Z" /></Framed>
          <Framed $c="#00c040" $w={74} $h={47} aria-label="Close"><Cross /></Framed>
        </CaptionButtons>
      </PaintTitle>
      <RibbonTabs>
        <RibbonTab $c="#008080" $bg="#1979ca" $w={85} $h={37}>File</RibbonTab>
        <RibbonTab $c="#c08080" $bg="#f5f6f7" $w={85} $h={37}>Home</RibbonTab>
        <RibbonTab $c="#00c080" $w={78} $h={37}>View</RibbonTab>
        <RibbonEnd>
          <Framed $c="#40c080" $w={36} $h={36} aria-label="Collapse ribbon"><Stroke w={18} h={10} c="#aaa" s={2} d="M1 9 9 1 17 9" /></Framed>
          <Framed $c="#80c080" $w={34} $h={36} aria-label="Help"><Help /></Framed>
        </RibbonEnd>
      </RibbonTabs>
      <Ribbon>
        <Group $c="#c0c080" $w={151}>
          <Stack>
            <Big $c="#4000c0" $w={65} $h={57} aria-label="Paste"><Clipboard /></Big>
            <BigLabel $c="#8000c0" $w={65} $h={46}>Paste<Down /></BigLabel>
          </Stack>
          <Stack $l={-2}>
            <Tool $c="#c000c0" $off $w={63} $h={33}><Scissors />Cut</Tool>
            <Tool $c="#0040c0" $off $w={76} $h={34}><CopyIcon />Copy</Tool>
          </Stack>
          <GroupName $r={8}>Clipboard</GroupName>
        </Group>
        <Group $c="#4040c0" $w={172}>
          <Stack>
            <Big $c="#c040c0" $w={65} $h={57} aria-label="Select"><SelectIcon /></Big>
            <BigLabel $c="#0080c0" $w={65} $h={46}>Select<Down /></BigLabel>
          </Stack>
          <Stack $l={-2}>
            <Tool $c="#4080c0" $off $w={73} $h={33}><CropIcon />Crop</Tool>
            <Tool $c="#8080c0" $w={83} $h={33}><ResizeIcon />Resize</Tool>
            <Tool $c="#c080c0" $w={97} $h={35}><RotateIcon />Rotate<Down /></Tool>
          </Stack>
          <GroupName $r={8}>Image</GroupName>
        </Group>
        <Group $c="#00c0c0" $w={117}>
          <ToolGrid>
            <Framed $c="#40c0c0" $h={35} aria-label="Pencil"><Pencil /></Framed>
            <Framed $c="#80c0c0" $h={35} aria-label="Fill"><Bucket /></Framed>
            <LetterTool $c="#c0c0c0" $h={35} aria-label="Text">A</LetterTool>
            <Framed $c="#000" $h={35} aria-label="Eraser"><Eraser /></Framed>
            <Framed $c="#400000" $h={35} aria-label="Colour picker"><Picker /></Framed>
            <Framed $c="#800000" $h={35} aria-label="Magnifier"><Magnifier /></Framed>
          </ToolGrid>
          <GroupName $r={10}>Tools</GroupName>
        </Group>
        <Group $c="#c00000" $w={76}>
          <Stack>
            <Big $c="#404000" $bg="#c9e0f7" $w={64} $h={57} aria-label="Brush"><BrushPicture /></Big>
            <BigLabel $c="#804000" $bg="#c9e0f7" $w={64} $h={46}>Brushes<Down /></BigLabel>
          </Stack>
        </Group>
        <Shapes>
          <Stack>
            <Framed $c="#c04000" $w={32} $h={31} aria-label="Line"><Stroke w={24} h={18} c="#1f6cae" s={1.5} d="M1 1 23 17" /></Framed>
            <Framed $c="#008000" $w={32} $h={32} aria-label="Polygon"><Stroke w={24} h={19} c="#1f6cae" s={1.5} d="M6 1H18L16 11H23V18H1Z" /></Framed>
            <Framed $c="#408000" $w={32} $h={32} aria-label="Hexagon"><Stroke w={24} h={25} c="#1f6cae" s={1.5} d="M12 1 23 7V18L12 24 1 18V7Z" /></Framed>
          </Stack>
          <ShapeMore />
        </Shapes>
        <SizeArea>
          <SizeLine />
          <Sep $l={1} $r={1} />
          <SizeButton aria-label="Colour 1"><i /></SizeButton>
          {swatches.map((c) => <Swatch key={c} $bg={c} aria-label={c} />)}
          <Rainbow aria-label="Edit colours" />
        </SizeArea>
      </Ribbon>
      <Canvas />
      <Status>
        <Cell $c="#800040"><MoveIcon /></Cell>
        <Cell $c="#c00040"><ExtentIcon dashed /></Cell>
        <Cell $c="#004040"><ExtentIcon />1152 × 648px</Cell>
        <Cell $c="#404040" />
        <Cell $c="#804040" $grow={213} />
        <ZoomGroup $c="#c04040">
          <ZoomValue $c="#00c000">100%</ZoomValue>
          <Framed $c="#40c000" $w={36} $h={37} aria-label="Zoom out"><RoundIcon /></Framed>
          <Slider>
            <TrackPart $c="#80c000" /><TrackPart $c="#000040" />
            <Range type="range" min="0" max="100" defaultValue="50" aria-label="Zoom" />
          </Slider>
          <Framed $c="#400040" $w={36} $h={37} aria-label="Zoom in"><RoundIcon plus /></Framed>
        </ZoomGroup>
        <GripSlot><Dots /></GripSlot>
      </Status>
    </Paint>
  );
}

function SaveDialog() {
  return (
    <Dialog role="dialog" aria-label="Save Print Output As">
      <DialogTitle>
        <TitleIcon $c="#000080"><Palette /></TitleIcon>
        <TitleText $c="#80c040">Save Print Output As</TitleText>
        <TitleClose $c="#400080" $w={54} $h={47} aria-label="Close"><Cross c="#fff" s={2} /></TitleClose>
      </DialogTitle>
      <NavBar $c="#c04000">
        <History $c="#008000">
          <Framed $c="#808000" $w={47} $h={48} aria-label="Back"><Stroke w={20} h={16} c="#fff" s={2} d="M20 8H1M8 1 1 8 8 15" /></Framed>
          <Framed $c="#c08000" $w={47} $h={48} aria-label="Forward"><Stroke w={20} h={16} c="#888" s={2} d="M0 8H19M12 1 19 8 12 15" /></Framed>
          <Framed $c="#00c000" $w={25} $h={48} aria-label="Recent"><Chev c="#fff" s={2} /></Framed>
        </History>
        <UpOuter $c="#80c000"><UpInner $c="#40c000"><Framed $c="#c0c000" $w={38} $h={41} aria-label="Up"><Stroke w={16} h={20} c="#fff" s={2} d="M8 20V1M1 8 8 1 15 8" /></Framed></UpInner></UpOuter>
        <PathBar $c="#000040">
          <Path $c="#c00040">
            <Crumb $c="#004040" $w={55} $h={49} aria-label="Root"><DocIcon /><Chev dir="right" /></Crumb>
            <Crumb $c="#404040" $w={92} $h={49}>This PC<Chev dir="right" /></Crumb>
            <Crumb $c="#804040" $w={127} $h={49}>Documents<Chev dir="right" /></Crumb>
          </Path>
          <PathButton $c="#008040" $w={53} $h={49} aria-label="Previous locations"><Chev c="#999" /></PathButton>
          <PathButton $c="#408040" $w={53} $h={49} aria-label="Refresh"><Stroke w={18} h={18} c="#999" s={3} d="M12 4A7 7 0 1 1 5 4M1 2H7V8" /></PathButton>
        </PathBar>
        <Tick $c="#808040" $w={7} />
        <SearchField $c="#00c040">
          <Stroke w={19} h={19} c="#888" s={1.5} d="M0 19 7 12M7 7A5.500 5.500 0 1 0 18 7A5.500 5.500 0 1 0 7 7" />
          <input placeholder="Search Documents" aria-label="Search Documents" />
        </SearchField>
        <Tick $c="#40c040" $w={10} />
      </NavBar>
      <Commands>
        <Command $c="#008000" $w={134} $h={44}>Organise<Down c="#ccc" /></Command>
        <Command $c="#408000" $w={136} $h={44}>New folder</Command>
        <ViewGroup $c="#804000">
          <svg width="22" height="22" viewBox="0 0 22 22"><path d="M0 0H6V22H0Z" fill="#ddd" /><path d="M2 2h2v2H2z" fill="#357" /><path d="M2 7h2v2H2z" fill="#964" /><path d="M2 12h2v2H2z" fill="#c22" /><path d="M2 17h2v2H2z" fill="#6a4" /><path d="M8 3H13M16 3H22M8 8H13M16 8H22M8 13H13M16 13H22M8 18H13M16 18H22" stroke="#888" /></svg>
          <Framed $c="#c04000" $w={24} $h={44} aria-label="View options"><Down c="#ccc" /></Framed>
        </ViewGroup>
        <Framed $c="#404000" $w={45} $h={44} aria-label="Help"><Help /></Framed>
      </Commands>
      <Body>
        <Tree $c="#c08000">
          {nodes.map(([name, Icon, c, o]) => (
            <Node key={name} $root={o.root} $on={o.on}>
              <Icon />
              <NodeName $c={c}>{name}</NodeName>
              {o.pin && <Pin />}
            </Node>
          ))}
        </Tree>
        <VBar>
          <Framed $c="#40c000" $w={29} $h={28} aria-label="Scroll up"><Chev dir="up" c="#777" /></Framed>
          <BarPart $c="#80c000" $f={81} />
          <BarPart $c="#c0c000" $f={231} $bg="#4d4d4d" />
          <BarPart $c="#000040" $f={10} />
          <Framed $c="#400040" $w={29} $h={29} aria-label="Scroll down"><Chev c="#777" /></Framed>
        </VBar>
        <Files $c="#00c040">
          <FileTable>
            <thead>
              <HeadRow>
                <HeadCell $c="#c00080" $l={27}>Name<Stroke w={12} h={6} c="#aaa" d="M0 6 6 1 12 6" /><Splitter $c="#004080" $w={25} /></HeadCell>
                <HeadCell $c="#404080" $l={10}>Date modified<Splitter $c="#804080" $w={27} /></HeadCell>
                <HeadCell $c="#800080" $l={0} />
              </HeadRow>
            </thead>
            <tbody>
              {files.map(([name, date, row, a, b, c]) => (
                <FileRow key={name} $c={row}>
                  <FileCell $c={a} $l={5}><Folder /></FileCell>
                  <FileCell $c={b} $l={4}>{name}</FileCell>
                  <FileCell $c={c} $l={9} $fg="#dedede">{date}</FileCell>
                </FileRow>
              ))}
            </tbody>
          </FileTable>
          <HBar>
            <Framed $c="#80c040" $w={28} $h={29} aria-label="Scroll left"><Chev dir="left" c="#777" /></Framed>
            <BarPart $c="#c0c040" $f={429} $bg="#4d4d4d" />
            <BarPart $c="#000080" $f={221} />
            <Framed $c="#400080" $w={29} $h={29} aria-label="Scroll right"><Chev dir="right" c="#777" /></Framed>
          </HBar>
        </Files>
      </Body>
      <Form $c="#c00000" onSubmit={(e) => e.preventDefault()}>
        <FieldLabel $c="#c080c0" htmlFor="name">File name:</FieldLabel>
        <NameField $c="#00c0c0">
          <NameInput $c="#40c0c0" id="name" autoFocus />
          <Framed type="button" $c="#80c0c0" $w={27} $h={34} aria-label="Recent names"><Stroke w={12} h={7} c="#bbb" s={1.5} d="M1 1 6 6 11 1" /></Framed>
        </NameField>
        <FieldLabel $c="#c0c0c0" htmlFor="type">Save as type:</FieldLabel>
        <TypeField $c="#000">
          <TypeSelect id="type"><option>PDF Document (*.pdf)</option></TypeSelect>
          <i /><Stroke w={12} h={7} c="#bbb" s={1.5} d="M1 1 6 6 11 1" />
        </TypeField>
      </Form>
      <Footer>
        <HideWrap $c="#800000">
          <Command $c="#c00000" $w={135} $h={34}><Chev dir="up" c="#ccc" />Hide Folders</Command>
        </HideWrap>
        <Action $c="#004000" $edge="#fff">Save</Action>
        <Action $c="#404000" $edge="#999" $l={15}>Cancel</Action>
        <DialogGrip $c="#804000"><Dots /></DialogGrip>
      </Footer>
      <PaneOutline $c="#400000" />
    </Dialog>
  );
}

export default function App() {
  return (
    <Desktop>
      <Global />
      <BrowserWindow />
      <PaintWindow />
      <SaveDialog />
    </Desktop>
  );
}
